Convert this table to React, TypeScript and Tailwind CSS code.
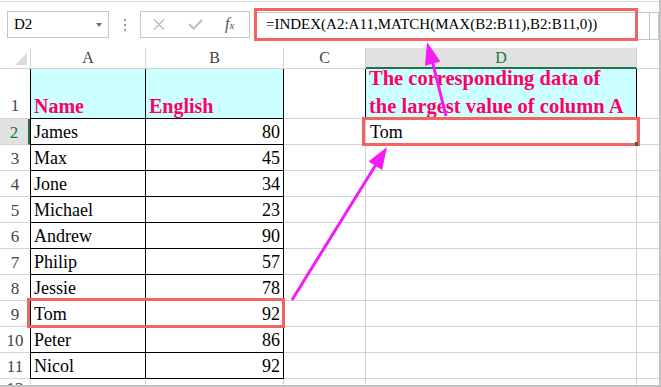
import React from "react";

const data: [string, number][] = [
  ["James", 80],
  ["Max", 45],
  ["Jone", 34],
  ["Michael", 23],
  ["Andrew", 90],
  ["Philip", 57],
  ["Jessie", 78],
  ["Tom", 92],
  ["Peter", 86],
  ["Nicol", 92],
];

export default function App() {
  return (
    <div className="relative w-[661px] h-[387px] bg-[#c2c2c2] overflow-hidden font-['Liberation_Serif','Times_New_Roman',serif] text-black">
      <div className="w-[659px] h-[385px] bg-white overflow-hidden flex flex-col">
        {/* Formula toolbar */}
        <div className="mt-[1px] h-[47px] shrink-0 border-t border-[#dadada] flex items-start pt-[9px]">
          <div className="ml-[7px] w-[102px] h-[27px] border border-[#c6c6c6] flex items-center justify-between pl-[6px] pr-[6px]">
            <span className="text-[15px] leading-[25px]">D2</span>
            <svg width="6" height="4" viewBox="0 0 6 4">
              <polygon points="0,0 6,0 3,4" fill="#6f6f6f" />
            </svg>
          </div>
          <div className="ml-[15px] mt-[8px] w-[2px] flex flex-col gap-[3px]">
            <div className="w-[2px] h-[2px] bg-[#9a9a9a]" />
            <div className="w-[2px] h-[2px] bg-[#9a9a9a]" />
            <div className="w-[2px] h-[2px] bg-[#9a9a9a]" />
          </div>
          <div className="ml-[14px] w-[110px] h-[27px] border border-[#c6c6c6] flex items-center pl-[12px]">
            <svg width="12" height="11" viewBox="0 0 12 11">
              <path d="M1 0.5 L11 10.5 M11 0.5 L1 10.5" stroke="#bdbdbd" strokeWidth="1.4" fill="none" />
            </svg>
            <svg className="ml-[23px]" width="15" height="11" viewBox="0 0 15 11">
              <path d="M1 5 L5.5 9.5 L14 1" stroke="#c2c2c2" strokeWidth="2.4" fill="none" />
            </svg>
            <span className="ml-[22px] text-[#555] italic leading-[20px]">
              <span className="text-[16px]">f</span>
              <span className="text-[11px]">x</span>
            </span>
          </div>
          <div className="ml-[6px] mt-[1px] flex-1 h-[28px] border border-[#c6c6c6] flex">
            <div className="flex-1 pl-[9px] text-[15px] leading-[23px] whitespace-nowrap">
              =INDEX(A2:A11,MATCH(MAX(B2:B11),B2:B11,0))
            </div>
            <div className="w-[9px] border-l border-[#c6c6c6]" />
          </div>
        </div>

        {/* Column headers */}
        <div className="flex h-[21px] shrink-0 text-[16px] leading-[20px] text-[#444]">
          <div className="w-[31px] h-full border-r border-b border-[#d4d4d4] flex items-end justify-end pr-[3px] pb-[3px]">
            <svg width="12" height="12" viewBox="0 0 12 12">
              <polygon points="12,0 12,12 0,12" fill="#dcdcdc" />
            </svg>
          </div>
          <div className="w-[115px] h-full border-r border-b border-[#d4d4d4] text-center">A</div>
          <div className="w-[138px] h-full border-r border-b border-[#d4d4d4] text-center">B</div>
          <div className="w-[82px] h-full border-r border-b border-[#d4d4d4] text-center">C</div>
          <div className="w-[271px] h-full bg-[#e1e1e1] border-r border-r-[#d4d4d4] border-b-2 border-b-[#217346] text-center text-[#217346] leading-[19px]">
            D
          </div>
          <div className="flex-1 h-full border-b border-[#d4d4d4]" />
        </div>

        {/* Row 1 */}
        <div className="flex h-[50px] shrink-0">
          <div className="w-[30px] h-full border-b border-[#d4d4d4] flex items-end justify-center pb-[2px] text-[17px] leading-[20px] text-[#444]">
            1
          </div>
          <div className="w-[116px] h-full bg-[#ccffff] border-l border-r border-b border-black flex items-end pl-[3px] pb-[2px] text-[20px] leading-[20px] font-bold text-[#ff0066]">
            Name
          </div>
          <div className="w-[138px] h-full bg-[#ccffff] border-r border-b border-black flex items-end pl-[3px] pb-[2px] text-[20px] leading-[20px] font-bold text-[#ff0066]">
            English
          </div>
          <div className="w-[82px] h-full border-r border-r-black border-b border-b-[#d4d4d4]" />
          <div className="w-[271px] h-full bg-[#ccffff] border-r border-b border-black flex flex-col justify-end pl-[3px]">
            <div className="mb-[-2px] text-[20.5px] leading-[28px] font-bold text-[#ff0066] whitespace-nowrap">
              The corresponding data of
              <br />
              the largest value of column A
            </div>
          </div>
          <div className="flex-1 h-full border-b border-[#d4d4d4]" />
        </div>

        {/* Rows 2-11 */}
        {data.map(([name, score], i) => {
          const n = i + 2;
          const sel = n === 2;
          return (
            <div key={n} className="flex h-[26px] shrink-0 text-[18px] leading-[23px]">
              <div
                className={
                  sel
                    ? "w-[30px] h-full bg-[#e1e1e1] border-b border-b-[#d4d4d4] border-r-2 border-r-[#217346] text-center pt-[2px] text-[17px] text-[#217346]"
                    : "w-[30px] h-full border-b border-[#d4d4d4] text-center pt-[2px] text-[17px] text-[#444]"
                }
              >
                {n}
              </div>
              <div className="w-[116px] h-full border-l border-r border-b border-black pl-[3px] pt-[2px] whitespace-nowrap">
                {name}
              </div>
              <div className="w-[138px] h-full border-r border-b border-black pr-[3px] pt-[2px] text-right">
                {score}
              </div>
              <div className="w-[82px] h-full border-r border-b border-[#d4d4d4]" />
              <div className="w-[271px] h-full border-r border-b border-[#d4d4d4] pl-[4px] pt-[2px]">
                {sel ? "Tom" : ""}
              </div>
              <div className="flex-1 h-full border-b border-[#d4d4d4]" />
            </div>
          );
        })}

        {/* Row 12 (partial) */}
        <div className="flex h-[6px] shrink-0 overflow-hidden">
          <div className="w-[30px] h-full text-center pt-[3px] text-[17px] leading-[14px] text-[#444]">12</div>
          <div className="w-[116px] h-full border-l border-r border-[#d4d4d4]" />
          <div className="w-[138px] h-full border-r border-[#d4d4d4]" />
          <div className="w-[82px] h-full border-r border-[#d4d4d4]" />
          <div className="w-[271px] h-full border-r border-[#d4d4d4]" />
          <div className="flex-1 h-full" />
        </div>
      </div>

      {/* Annotations */}
      <div className="absolute left-[254px] top-[8px] w-[384px] h-[33px] border-[3px] border-[#f26464]" />
      <div className="absolute left-[362px] top-[117px] w-[278px] h-[29px] border-[3px] border-[#f26464]" />
      <div className="absolute left-[635px] top-[142px] w-[3px] h-[4px] bg-[#217346]" />
      <div className="absolute left-[27px] top-[298px] w-[258px] h-[30px] border-[3px] border-[#f26464]" />

      <svg className="absolute left-0 top-0 pointer-events-none" width="661" height="387" viewBox="0 0 661 387">
        <line x1="446" y1="116" x2="432.7" y2="63" stroke="#f41cf4" strokeWidth="3" />
        <polygon points="427,42 440.4,61.5 425,65.7" fill="#f41cf4" />
        <line x1="292" y1="300" x2="376" y2="164.5" stroke="#f41cf4" strokeWidth="3" />
        <polygon points="387,147 382.1,169.9 368.5,161.5" fill="#f41cf4" />
      </svg>
    </div>
  );
}
